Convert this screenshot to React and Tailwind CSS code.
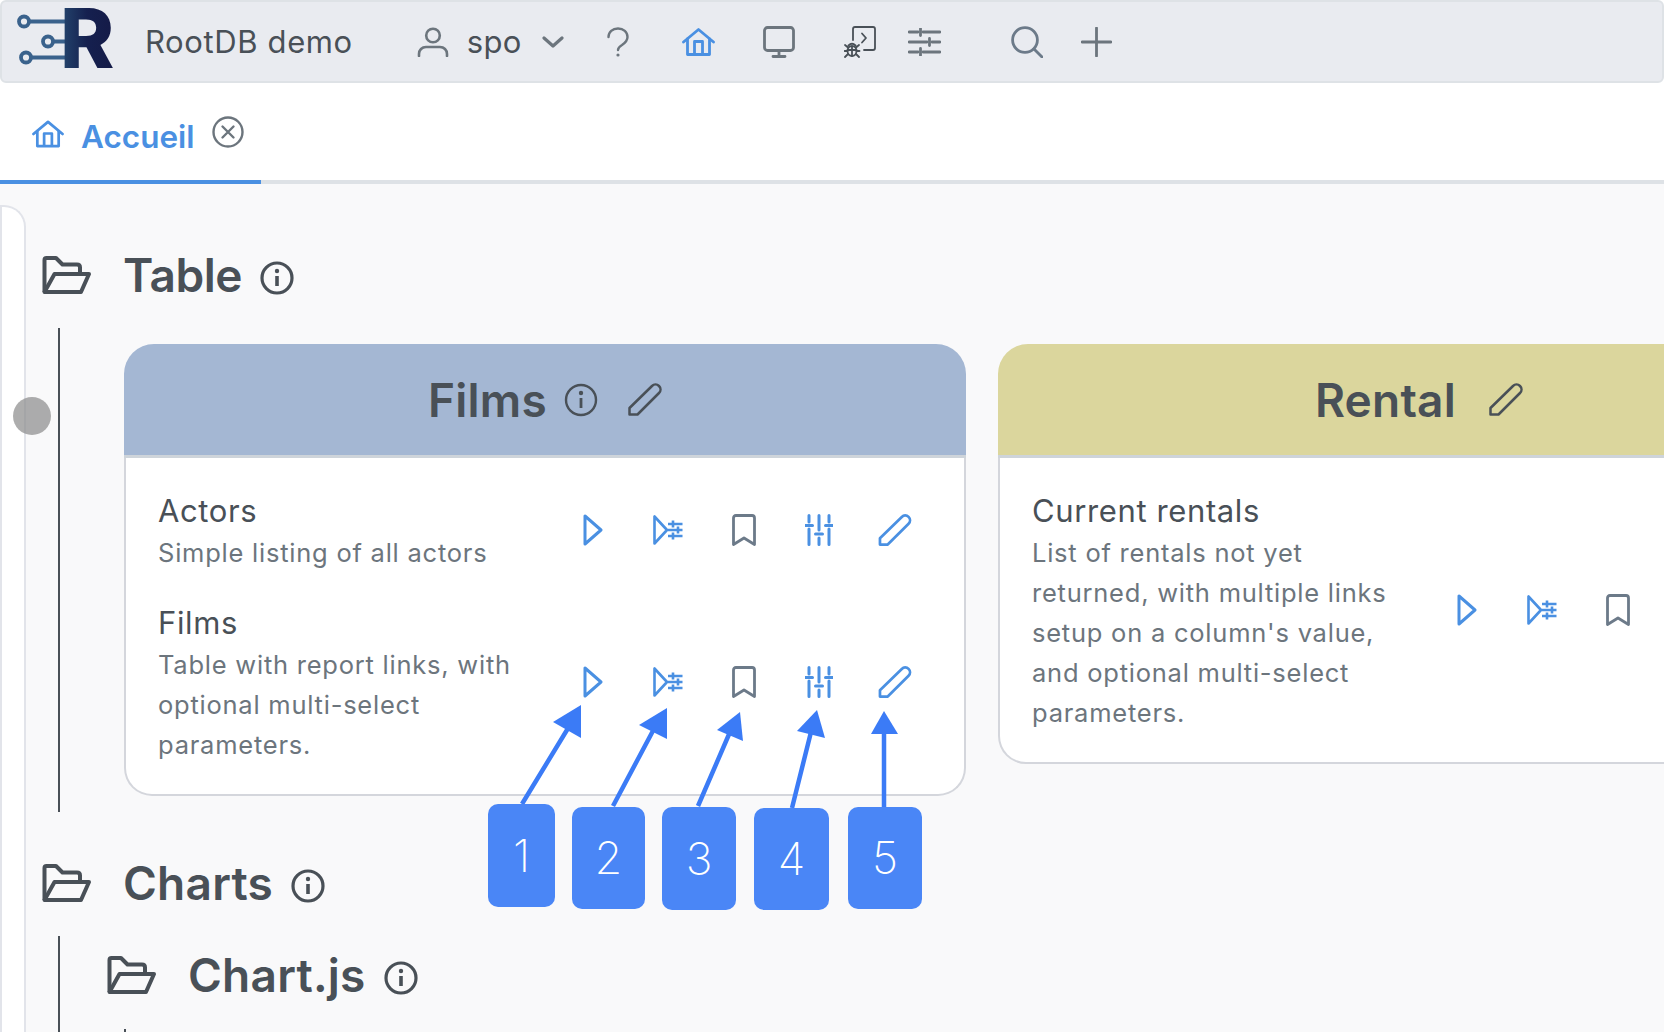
import React from "react";

const Svg = ({ vb, className, children, sw = 3 }) => (
  <svg viewBox={vb} className={className} fill="none" stroke="currentColor" strokeWidth={sw} strokeLinecap="round" strokeLinejoin="round">
    {children}
  </svg>
);

const Home = ({ className }) => (
  <Svg vb="0 0 33 28" className={className} sw={2.8}>
    <path d="M1.5 14 L16.5 1.5 L31.5 14" />
    <path d="M5.5 11 V26.5 H27.5 V11" />
    <path d="M12.5 26 V13.5 H20.5 V26" />
  </Svg>
);

const Info = ({ className, sw = 3.2 }) => (
  <svg viewBox="0 0 34 34" className={className} fill="none" stroke="currentColor" strokeWidth={sw}>
    <circle cx="17" cy="17" r="15" />
    <circle cx="17" cy="10" r="2.2" fill="currentColor" stroke="none" />
    <path d="M17 15 V25" strokeWidth={sw + 0.4} />
  </svg>
);

const Pencil = ({ className, sw = 2.8 }) => (
  <Svg vb="0 0 34 33" className={className} sw={sw}>
    <path d="M1.5 31.5 V25 L24 3 C26 1 29 1 31 3 C33 5 33 8 31 10 L9.5 31.5 Z" />
  </Svg>
);

const Play = ({ className }) => (
  <Svg vb="0 0 20 32" className={className} sw={3}>
    <path d="M2 2 V30 L18 16 Z" />
  </Svg>
);

const PlayList = ({ className }) => (
  <Svg vb="0 0 30 32" className={className} sw={2.6}>
    <path d="M1.5 2.5 V29.5 L14 16 Z" />
    <path d="M15 10 H29.5 M15 16 H29.5 M15 22 H29.5" strokeLinecap="butt" />
    <path d="M20 6.5 V13.5 M25 12.5 V19.5 M20 18.5 V25.5" strokeLinecap="butt" />
  </Svg>
);

const Bookmark = ({ className }) => (
  <Svg vb="0 0 24 32" className={className} sw={2.8}>
    <path d="M1.5 30.5 V4 Q1.5 1.5 4 1.5 H20 Q22.5 1.5 22.5 4 V30.5 L12 24 Z" />
  </Svg>
);

const SlidersV = ({ className }) => (
  <Svg vb="0 0 28 32" className={className} sw={3}>
    <path d="M4 1.5 V8 M4 15 V30.5 M14 1.5 V16 M14 24 V30.5 M24 1.5 V8 M24 15 V30.5" />
    <path d="M0.5 11.5 H7.5 M10.5 20 H17.5 M20.5 11.5 H27.5" />
  </Svg>
);

const Folder = ({ className }) => (
  <svg viewBox="0 0 49 38" className={className} fill="none" stroke="currentColor" strokeWidth="4" strokeLinejoin="round">
    <path d="M2.5 36 V4 Q2.5 2 4.5 2 H14 L20.5 8.5 H35 Q38 8.5 38 11.5 V17" />
    <path d="M2.5 36 L12.5 18 H47 L39 36 Z" />
  </svg>
);

const Action = ({ children }) => <div className="flex h-[34px] w-[75.5px] items-center justify-center">{children}</div>;

const Actions = () => (
  <div className="flex shrink-0">
    <Action><Play className="h-8 w-5 text-[#4a90e2]" /></Action>
    <Action><PlayList className="h-8 w-[30px] text-[#4a90e2]" /></Action>
    <Action><Bookmark className="h-8 w-6 text-[#6c7a89]" /></Action>
    <Action><SlidersV className="h-8 w-7 text-[#4a90e2]" /></Action>
    <Action><Pencil className="h-8 w-[34px] text-[#4a90e2]" /></Action>
  </div>
);

const Row = ({ title, desc }) => (
  <div className="flex items-center gap-[27px]">
    <div className="w-[370px] shrink-0">
      <div className="pt-px text-[31px] leading-[45px] tracking-[0.02em] text-[#495057]">{title}</div>
      <div className="text-[25.5px] leading-[40px] tracking-[0.03em] text-[#6c757d]">{desc}</div>
    </div>
    <Actions />
  </div>
);

const Card = ({ title, head, info, children }) => (
  <div className="w-[842px] shrink-0 self-start">
    <div className={`flex h-[114px] items-center justify-center rounded-t-[30px] border-b-[3px] border-[#ced4da] ${head}`}>
      <span className="text-[46px] font-semibold leading-[54px] tracking-[0.005em] text-[#495057]">{title}</span>
      {info && <Info className="ml-[17px] h-[34px] w-[34px] text-[#495057]" sw={2.4} />}
      <Pencil className={`${info ? "ml-[30px]" : "ml-[33px]"} h-[33px] w-[34px] text-[#495057]`} sw={2.5} />
    </div>
    <div className="flex flex-col gap-[26px] rounded-b-[28px] border-2 border-t-0 border-[#d4d6dc] bg-white py-[29px] pl-8">
      {children}
    </div>
  </div>
);

const Heading = ({ title, className = "", titleClass = "tracking-[0.005em]" }) => (
  <div className={`flex h-[54px] items-center ${className}`}>
    <Folder className="h-[38px] w-[49px] text-[#495057]" />
    <span className={`ml-8 text-[46px] font-semibold leading-[54px] text-[#495057] ${titleClass}`}>{title}</span>
    <Info className="ml-[18px] mt-[6px] h-[34px] w-[34px] text-[#495057]" />
  </div>
);

export default function App() {
  return (
    <div className="relative h-[1032px] w-[1664px] overflow-hidden bg-white font-['Inter',sans-serif]">
      <nav className="flex h-[83px] items-center rounded-md border-2 border-[#dee2e6] bg-[#e9ebf0] pl-[14px]">
        <div className="relative h-[62px] w-[100px] shrink-0">
          <svg viewBox="0 0 100 62" className="h-[62px] w-[100px]">
            <g fill="none" stroke="#3a628c" strokeWidth="3.8">
              <circle cx="8" cy="10.5" r="5" />
              <circle cx="32" cy="30.5" r="5" />
              <circle cx="10" cy="46.5" r="5" />
              <path d="M13 10.5 H50 M37 30.5 H50 M15 46.5 H50" />
            </g>
          </svg>
          <span className="absolute left-[44px] top-[-3px] bg-gradient-to-r from-[#25476f] via-[#15204f] to-[#141a47] bg-clip-text text-[82px] font-extrabold leading-[62px] text-transparent">R</span>
        </div>
        <span className="ml-[29px] text-[31px] leading-none tracking-[0.02em] text-[#495057]">RootDB demo</span>
        <Svg vb="0 0 32 30" className="ml-[64px] h-[30px] w-8 text-[#6c757d]" sw={2.6}>
          <circle cx="16" cy="8.5" r="6.8" />
          <path d="M2 29 V27 C2 23 5 20 9 20 H23 C27 20 30 23 30 27 V29" />
        </Svg>
        <span className="ml-[18px] text-[31px] leading-none tracking-[0.01em] text-[#495057]">spo</span>
        <Svg vb="0 0 22 12" className="ml-[20px] h-3 w-[22px] text-[#6c757d]" sw={3.2}>
          <path d="M2 2 L11 10 L20 2" />
        </Svg>
        <Svg vb="0 0 22 30" className="ml-[43px] h-[30px] w-[22px] text-[#6c757d]" sw={2.4}>
          <path d="M1.5 10 C1.5 5 5.5 1.5 11 1.5 C16.5 1.5 20.5 5 20.5 10 C20.5 14 18 16 15 18 C12.5 19.5 11 21 11 23" />
          <circle cx="11" cy="28" r="1.6" fill="currentColor" stroke="none" />
        </Svg>
        <Home className="ml-[53px] h-7 w-[33px] text-[#4a90e2]" />
        <Svg vb="0 0 32 32" className="ml-12 h-8 w-8 text-[#6c757d]" sw={2.8}>
          <rect x="1.5" y="1.5" width="29" height="23" rx="3" />
          <path d="M16 25 V30.5 M10 30.5 H22" />
        </Svg>
        <Svg vb="0 0 32 32" className="ml-[49px] h-8 w-8 text-[#495057]" sw={1.8}>
          <path d="M9 14 V3 Q9 1 11 1 H29 Q31 1 31 3 V22 Q31 24 29 24 H20" />
          <path d="M18 7.5 L22 12 L18 16.5" />
          <ellipse cx="8" cy="25" rx="4.5" ry="5" />
          <path d="M4.5 19.5 Q8 16 11.5 19.5 M3.5 24 H12.5 M8 21 V30 M1 19 L4 21.5 M15 19 L12 21.5 M0.5 25 H3.5 M15.5 25 H12.5 M1 31 L4 28 M15 31 L12 28" />
        </Svg>
        <Svg vb="0 0 33 28" className="ml-8 h-7 w-[33px] text-[#6c757d]" sw={2.8}>
          <path d="M1 4 H10 M15 4 H32 M1 14 H19 M24 14 H32 M1 24 H10 M15 24 H32" />
          <path d="M12.5 0.5 V7.5 M21.5 10.5 V17.5 M12.5 20.5 V27.5" />
        </Svg>
        <Svg vb="0 0 32 32" className="ml-[70px] h-8 w-8 text-[#6c7a89]" sw={2.8}>
          <circle cx="14" cy="14" r="12.4" />
          <path d="M23 23 L31 31" />
        </Svg>
        <Svg vb="0 0 31 30" className="ml-[38px] h-[30px] w-[31px] text-[#6c757d]" sw={2.8}>
          <path d="M15.5 1 V29 M1 15 H30" />
        </Svg>
      </nav>

      <div className="flex h-[101px] items-end border-b-4 border-[#dee2e6]">
        <div className="-mb-1 flex h-[101px] w-[261px] items-start border-b-4 border-[#4a90e2] pl-8 pt-[33px]">
          <Home className="mt-1 h-7 w-8 text-[#4a90e2]" />
          <span className="ml-[17px] mt-[3px] text-[31.5px] font-semibold leading-9 text-[#4a90e2]">Accueil</span>
          <Svg vb="0 0 32 32" className="ml-[17px] h-8 w-8 text-[#6c757d]" sw={2.4}>
            <circle cx="16" cy="16" r="14.5" />
            <path d="M10.5 10.5 L21.5 21.5 M21.5 10.5 L10.5 21.5" />
          </Svg>
        </div>
      </div>

      <div className="flex h-[848px] bg-[#f9f9fa]">
        <div className="mt-[21px] w-[26px] shrink-0 rounded-tr-[22px] border-l-2 border-r-2 border-t-2 border-[#e2e4ea] bg-white" />
        <div className="min-w-0 flex-1 pl-4 pt-[64px]">
          <Heading title="Table" titleClass="tracking-[-0.01em]" />
          <div className="ml-4 mt-[26px] flex gap-8 border-l-2 border-[#495057] pb-4 pl-16 pt-4">
            <Card title="Films" head="bg-[#a4b7d3]" info>
              <Row title="Actors" desc="Simple listing of all actors" />
              <Row title="Films" desc="Table with report links, with optional multi-select parameters." />
            </Card>
            <Card title="Rental" head="bg-[#dbd69d]">
              <Row title="Current rentals" desc="List of rentals not yet returned, with multiple links setup on a column's value, and optional multi-select parameters." />
            </Card>
          </div>
          <Heading title="Charts" className="mt-[44px]" />
          <div className="ml-4 mt-[26px] border-l-2 border-[#495057] pl-[47px] pt-3">
            <Heading title="Chart.js" />
            <div className="ml-[17px] mt-[27px] h-8 border-l-2 border-[#495057]" />
          </div>
        </div>
      </div>

      <div className="absolute left-[13px] top-[397px] h-[38px] w-[38px] rounded-full bg-[#8a8a8a]/70" />

      <svg viewBox="0 0 1664 1032" className="pointer-events-none absolute left-0 top-0 h-[1032px] w-[1664px]" fill="#3b7bf6" stroke="none">
        <path d="M522 804 L570 725 M613 806 L655 727 M698 806 L730 732 M792 808 L811 732 M884 808 L884 732" stroke="#3b7bf6" strokeWidth="4.5" fill="none" />
        <polygon points="581,705 553,722 581,738" />
        <polygon points="667,708 639,725 667,739" />
        <polygon points="740,712 717,730 743,741" />
        <polygon points="817,710 797,731 825,738" />
        <polygon points="884,711 871,734 898,734" />
      </svg>
      <div className="absolute left-[488px] top-[804px] flex h-[103px] w-[67px] items-center justify-center rounded-[10px] bg-[#4a86f6] text-[45px] font-extralight text-white">1</div>
      <div className="absolute left-[572px] top-[807px] flex h-[102px] w-[73px] items-center justify-center rounded-[10px] bg-[#4a86f6] text-[45px] font-extralight text-white">2</div>
      <div className="absolute left-[662px] top-[807px] flex h-[103px] w-[74px] items-center justify-center rounded-[10px] bg-[#4a86f6] text-[45px] font-extralight text-white">3</div>
      <div className="absolute left-[754px] top-[808px] flex h-[102px] w-[75px] items-center justify-center rounded-[10px] bg-[#4a86f6] text-[45px] font-extralight text-white">4</div>
      <div className="absolute left-[848px] top-[807px] flex h-[102px] w-[74px] items-center justify-center rounded-[10px] bg-[#4a86f6] text-[45px] font-extralight text-white">5</div>
    </div>
  );
}
